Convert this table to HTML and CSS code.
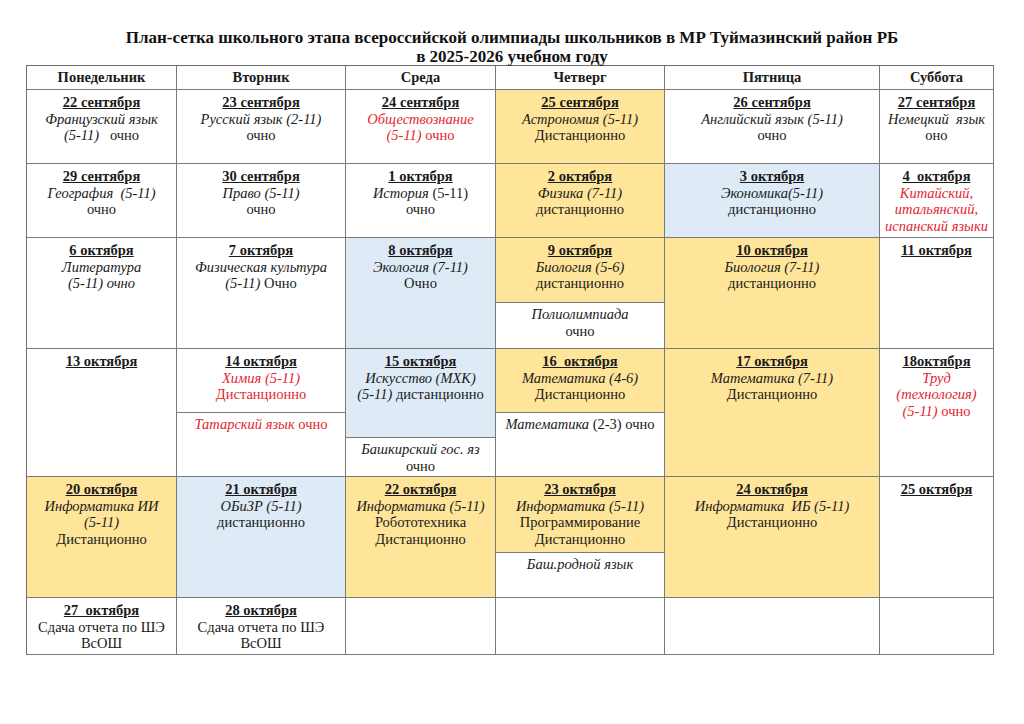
FILE: index.html
```html
<!DOCTYPE html>
<html lang="ru">
<head>
<meta charset="utf-8">
<title>План-сетка</title>
<link rel="stylesheet" href="styles.css">
</head>
<body>
<div class="page">
  <h1 class="title">План-сетка школьного этапа всероссийской олимпиады школьников в МР Туймазинский район РБ<br>в 2025-2026 учебном году</h1>
  <div class="grid">
    <div class="cell head">Понедельник</div>
    <div class="cell head">Вторник</div>
    <div class="cell head">Среда</div>
    <div class="cell head">Четверг</div>
    <div class="cell head">Пятница</div>
    <div class="cell head">Суббота</div>

    <div class="cell"><div class="d">22 сентября</div><i>Французский язык</i><br><i>(5-11)</i>&nbsp;&nbsp; очно</div>
    <div class="cell"><div class="d">23 сентября</div><i>Русский язык (2-11)</i><br>очно</div>
    <div class="cell"><div class="d">24 сентября</div><span class="red"><i>Обществознание</i><br><i>(5-11)</i> очно</span></div>
    <div class="cell yellow"><div class="d">25 сентября</div><i>Астрономия (5-11)</i><br>Дистанционно</div>
    <div class="cell"><div class="d">26 сентября</div><i>Английский язык (5-11)</i><br>очно</div>
    <div class="cell"><div class="d">27 сентября</div><i>Немецкий&nbsp; язык</i><br>оно</div>

    <div class="cell"><div class="d">29 сентября</div><i>География&nbsp; (5-11)</i><br>очно</div>
    <div class="cell"><div class="d">30 сентября</div><i>Право (5-11)</i><br>очно</div>
    <div class="cell"><div class="d">1 октября</div><i>История</i> (5-11)<br>очно</div>
    <div class="cell yellow"><div class="d">2 октября</div><i>Физика (7-11)</i><br>дистанционно</div>
    <div class="cell blue"><div class="d">3 октября</div><i>Экономика(5-11)</i><br>дистанционно</div>
    <div class="cell"><div class="d">4&nbsp; октября</div><span class="red"><i>Китайский,</i><br><i>итальянский,</i><br><i>испанский языки</i></span></div>

    <div class="cell"><div class="d">6 октября</div><i>Литература</i><br><i>(5-11) очно</i></div>
    <div class="cell"><div class="d">7 октября</div><i>Физическая культура</i><br><i>(5-11)</i> Очно</div>
    <div class="cell blue"><div class="d">8 октября</div><i>Экология (7-11)</i><br>Очно</div>
    <div class="cell split">
      <div class="part yellow h65"><div class="d">9 октября</div><i>Биология (5-6)</i><br>дистанционно</div>
      <div class="part rest"><i>Полиолимпиада</i><br>очно</div>
    </div>
    <div class="cell yellow"><div class="d">10 октября</div><i>Биология (7-11)</i><br>дистанционно</div>
    <div class="cell"><div class="d">11 октября</div></div>

    <div class="cell"><div class="d">13 октября</div></div>
    <div class="cell split">
      <div class="part h64"><div class="d">14 октября</div><span class="red"><i>Химия (5-11)</i><br>Дистанционно</span></div>
      <div class="part rest red"><i>Татарский язык</i> очно</div>
    </div>
    <div class="cell split">
      <div class="part blue h89"><div class="d">15 октября</div><i>Искусство (МХК)</i><br><i>(5-11)</i> дистанционно</div>
      <div class="part rest"><i>Башкирский гос. яз</i><br>очно</div>
    </div>
    <div class="cell split">
      <div class="part yellow h64"><div class="d">16&nbsp; октября</div><i>Математика (4-6)</i><br>Дистанционно</div>
      <div class="part rest"><i>Математика</i> (2-3) очно</div>
    </div>
    <div class="cell yellow"><div class="d">17 октября</div><i>Математика (7-11)</i><br>Дистанционно</div>
    <div class="cell"><div class="d">18октября</div><span class="red"><i>Труд</i><br><i>(технология)</i><br><i>(5-11)</i> очно</span></div>

    <div class="cell yellow"><div class="d">20 октября</div><i>Информатика ИИ</i><br><i>(5-11)</i><br>Дистанционно</div>
    <div class="cell blue"><div class="d">21 октября</div><i>ОБиЗР (5-11)</i><br>дистанционно</div>
    <div class="cell yellow"><div class="d">22 октября</div><i>Информатика (5-11)</i><br>Робототехника<br>Дистанционно</div>
    <div class="cell split">
      <div class="part yellow h76"><div class="d">23 октября</div><i>Информатика (5-11)</i><br>Программирование<br>Дистанционно</div>
      <div class="part rest"><i>Баш.родной язык</i></div>
    </div>
    <div class="cell yellow"><div class="d">24 октября</div><i>Информатика&nbsp; ИБ (5-11)</i><br>Дистанционно</div>
    <div class="cell"><div class="d">25 октября</div></div>

    <div class="cell"><div class="d">27&nbsp; октября</div>Сдача отчета по ШЭ<br>ВсОШ</div>
    <div class="cell"><div class="d">28 октября</div>Сдача отчета по ШЭ<br>ВсОШ</div>
    <div class="cell"></div>
    <div class="cell"></div>
    <div class="cell"></div>
    <div class="cell"></div>
  </div>
</div>
</body>
</html>
```
FILE: styles.css
```css
* { box-sizing: border-box; }
html, body { margin: 0; padding: 0; background: #fff; }
body {
  font-family: "Liberation Serif", "Times New Roman", serif;
  color: #1a1a1a;
  width: 1024px;
  height: 724px;
}
.page { padding-top: 28px; }
.title {
  margin: 0;
  font-size: 17px;
  line-height: 19px;
  font-weight: bold;
  text-align: center;
  color: #111;
}
.grid {
  margin-left: 26px;
  margin-top: -1px;
  width: 968px;
  display: grid;
  grid-template-columns: 150px 169px 150px 169px 215px 114px;
  grid-template-rows: 24px 74px 74px 111px 128px 121px 57px;
  border-left: 1px solid #6f6f6f;
  border-top: 1px solid #6f6f6f;
}
.cell {
  border-right: 1px solid #7a7a7a;
  border-bottom: 1px solid #7a7a7a;
  text-align: center;
  font-size: 14.5px;
  line-height: 16.7px;
  padding: 4px 1px 0;
  overflow: hidden;
}
.head {
  font-weight: bold;
  padding: 0;
  display: flex;
  align-items: center;
  justify-content: center;
}
.d { font-weight: bold; text-decoration: underline; }
.red { color: #e3262f; }
.yellow { background: #ffe599; }
.blue { background: #deebf7; }
.split {
  padding: 0;
  display: flex;
  flex-direction: column;
}
.part { padding: 4px 1px 0; }
.part:first-child { border-bottom: 1px solid #7a7a7a; flex: none; }
.rest { flex: 1; padding-top: 3px; }
.h64 { height: 64px; }
.h65 { height: 65px; }
.h76 { height: 76px; }
.h89 { height: 89px; }
```
